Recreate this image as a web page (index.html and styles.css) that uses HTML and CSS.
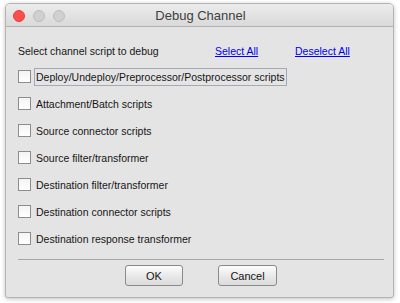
FILE: index.html
```html
<!DOCTYPE html>
<html>
<head>
<meta charset="utf-8">
<link rel="stylesheet" href="styles.css">
</head>
<body>
<div class="window">
  <div class="titlebar">
    <div class="lights">
      <span class="light close"></span>
      <span class="light"></span>
      <span class="light"></span>
    </div>
    <div class="title">Debug Channel</div>
  </div>
  <div class="content">
    <div class="header">
      <span class="label">Select channel script to debug</span>
      <a class="link sel" href="#">Select All</a>
      <a class="link" href="#">Deselect All</a>
    </div>
    <div class="rows">
      <div class="row"><span class="box"></span><span class="text focus">Deploy/Undeploy/Preprocessor/Postprocessor scripts</span></div>
      <div class="row"><span class="box"></span><span class="text">Attachment/Batch scripts</span></div>
      <div class="row"><span class="box"></span><span class="text">Source connector scripts</span></div>
      <div class="row"><span class="box"></span><span class="text">Source filter/transformer</span></div>
      <div class="row"><span class="box"></span><span class="text">Destination filter/transformer</span></div>
      <div class="row"><span class="box"></span><span class="text">Destination connector scripts</span></div>
      <div class="row"><span class="box"></span><span class="text">Destination response transformer</span></div>
    </div>
    <div class="sep"></div>
    <div class="buttons">
      <button class="btn ok">OK</button>
      <button class="btn cancel">Cancel</button>
    </div>
  </div>
</div>
</body>
</html>
```
FILE: styles.css
```css
html, body {
  margin: 0;
  padding: 0;
  background: #ffffff;
}
body {
  width: 400px;
  height: 303px;
  overflow: hidden;
}
.window {
  box-sizing: border-box;
  margin: 3px 0 0 5px;
  width: 389px;
  height: 295px;
  border: 1px solid #b4b4b4;
  border-radius: 5px 5px 3px 3px;
  background: #e4e4e4;
  box-shadow: 0 1px 4px rgba(0,0,0,0.25);
  display: flex;
  flex-direction: column;
  overflow: hidden;
  font-family: "Liberation Sans", Arial, sans-serif;
  color: #161616;
}
.titlebar {
  position: relative;
  height: 22px;
  flex: none;
  background: linear-gradient(#ececec, #d9d9d9);
  border-bottom: 1px solid #b1b1b1;
  display: flex;
  align-items: center;
  justify-content: center;
}
.lights {
  position: absolute;
  left: 7px;
  top: 6px;
  display: flex;
  gap: 8px;
}
.light {
  width: 12px;
  height: 12px;
  border-radius: 50%;
  box-sizing: border-box;
  background: #d0d0d0;
  border: 1px solid #bdbdbd;
}
.light.close {
  background: #fc4f4b;
  border-color: #e0403c;
}
.title {
  font-size: 13px;
  color: #404040;
  margin-left: 2px;
}
.content {
  flex: 1;
  padding: 17px 9px 0 12px;
  display: flex;
  flex-direction: column;
  font-size: 10.5px;
}
.header {
  display: flex;
  align-items: center;
  height: 14px;
}
.label {
  width: 197px;
}
.link {
  color: #0000ee;
  text-decoration: underline;
}
.link.sel {
  width: 80px;
}
.rows {
  margin-top: 5px;
  display: flex;
  flex-direction: column;
}
.row {
  height: 27px;
  display: flex;
  align-items: center;
}
.box {
  width: 13px;
  height: 13px;
  box-sizing: border-box;
  border: 1px solid #8d8d8d;
  background: linear-gradient(#f4f4f4, #ffffff);
  flex: none;
}
.text {
  margin-left: 3px;
  padding: 2px 1px 2px 1px;
  border: 1px solid transparent;
}
.text.focus {
  border-color: #a3aab6;
}
.sep {
  margin-top: 7px;
  height: 1px;
  background: #a6a6a6;
}
.buttons {
  margin-top: 5px;
  display: flex;
  justify-content: center;
  gap: 35px;
}
.btn {
  height: 21px;
  box-sizing: border-box;
  border: 1px solid #8a8a8a;
  border-radius: 3px;
  background: linear-gradient(#fdfdfd, #e6e6e6 60%, #dcdcdc);
  font-family: "Liberation Sans", Arial, sans-serif;
  font-size: 11px;
  color: #161616;
  padding: 0;
}
.btn.ok { width: 58px; }
.btn.cancel { width: 59px; }
```
